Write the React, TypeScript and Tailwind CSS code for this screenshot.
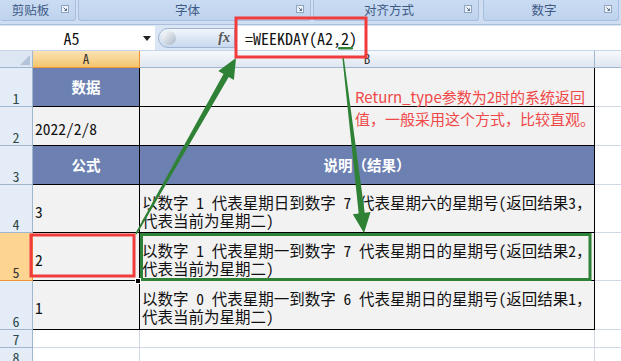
import type { ReactNode } from "react";

const cjk = "font-['Noto_Sans_CJK_SC','Noto_Sans_CJK_JP',sans-serif]";
const mono = "font-['Noto_Sans_Mono_CJK_SC','Noto_Sans_CJK_SC',monospace]";

const Launcher = () => (
	<svg width="8" height="8" viewBox="0 0 8 8" className="mr-[6px] mt-[5px] self-start">
		<rect x="0.5" y="0.5" width="7" height="7" fill="#eef3fa" stroke="#8ea3c0" />
		<path d="M2.5 2.5 L5.5 5.5 M3.5 5.5 H5.5 V3.5" stroke="#5b6f8f" strokeWidth="1" fill="none" />
	</svg>
);

const Group = ({ label, className }: { label: string; className: string }) => (
	<div
		className={`flex h-[21px] items-center rounded-b-[3px] border-x border-b border-[#a7bedc] bg-gradient-to-b from-[#cadcf2] to-[#bfd3ee] ${className}`}
	>
		<span className={`flex-1 text-center text-[12.5px] leading-none text-[#3e5a86] ${cjk}`}>{label}</span>
		<Launcher />
	</div>
);

const RowHead = ({ n, active }: { n: string; active?: boolean }) => (
	<div
		className={`flex w-[33px] shrink-0 items-end justify-center border-r border-b pb-[1px] text-[14px] leading-none ${mono} ${
			active
				? "border-[#f29436] bg-[#fdd591] text-[#333]"
				: "border-[#9eb6ce] bg-[#e4ecf7] text-[#2e4a4a]"
		}`}
	>
		{n}
	</div>
);

const HeadCell = ({ w, children }: { w: string; children?: ReactNode }) => (
	<div
		className={`flex ${w} shrink-0 items-center justify-center border-r border-b border-black bg-[#6c80b2] text-[14.5px] font-bold text-white ${cjk}`}
	>
		{children}
	</div>
);

const DataCell = ({ w, children }: { w: string; children?: ReactNode }) => (
	<div
		className={`flex ${w} shrink-0 items-center border-r border-b border-black bg-[#f2f2f2] pl-[2px] pt-[4px] text-[15.5px] leading-[18px] whitespace-nowrap text-[#111] ${mono}`}
	>
		<div>{children}</div>
	</div>
);

const Blank = () => <div className="flex-1 border-b border-[#d0d7e5] bg-white" />;

const lines: Record<string, [string, string]> = {
	"4": ["以数字 1 代表星期日到数字 7 代表星期六的星期号(返回结果3，", "代表当前为星期二)"],
	"5": ["以数字 1 代表星期一到数字 7 代表星期日的星期号(返回结果2，", "代表当前为星期二)"],
	"6": ["以数字 0 代表星期一到数字 6 代表星期日的星期号(返回结果1，", "代表当前为星期二)"],
};

export default function App() {
	return (
		<div className="relative h-[361px] w-[621px] overflow-hidden bg-white">
			{/* ribbon group labels */}
			<div className="flex h-[24px] gap-[2px] bg-[#cfdef2]">
				<Group label="剪贴板" className="w-[76px] border-l-0" />
				<Group label="字体" className="w-[233px]" />
				<Group label="对齐方式" className="w-[166px]" />
				<Group label="数字" className="ml-[2px] w-[136px]" />
			</div>

			{/* formula bar */}
			<div className="flex h-[26px] items-stretch border-t border-[#a9bfdc] bg-[#dbe6f4] pt-[1px]">
				<div className="flex w-[155px] items-center bg-white">
					<span className={`flex-1 text-center text-[16px] leading-none text-[#111] ${mono}`}>A5</span>
					<svg width="8" height="5" viewBox="0 0 8 5" className="mr-[4px]">
						<path d="M0 0 H8 L4 5 Z" fill="#222" />
					</svg>
				</div>
				<div className="my-[2px] ml-[3px] flex w-[77px] items-center rounded-l-full border border-[#9fb5d2] bg-gradient-to-b from-[#f1f6fc] to-[#c9d9ee]">
					<div className="ml-[3px] h-[14px] w-[14px] rounded-full bg-gradient-to-br from-[#ffffff] to-[#a9b6c6]" />
					<span className="ml-auto mr-[4px] font-['Liberation_Serif',serif] text-[14px] font-bold italic leading-none text-[#555]">
						fx
					</span>
				</div>
				<div className={`flex flex-1 items-center bg-white pl-[10px] text-[16px] text-[#111] ${mono}`}>
					=WEEKDAY(A2,2)
				</div>
			</div>

			{/* column headers */}
			<div className="flex h-[18px] border-t border-[#c5d5ea]">
				<div className="flex w-[33px] shrink-0 items-end justify-end border-r border-b border-[#9eb6ce] bg-[#dde7f4] p-[2px]">
					<svg width="10" height="10" viewBox="0 0 10 10">
						<path d="M10 0 V10 H0 Z" fill="#b4c4d8" />
					</svg>
				</div>
				<div
					className={`flex w-[107px] shrink-0 items-center justify-center border-r border-b border-[#f29436] bg-gradient-to-b from-[#fbe3b3] to-[#f3c56c] text-[13px] text-[#333] ${mono}`}
				>
					A
				</div>
				<div
					className={`flex w-[455px] shrink-0 items-center justify-center border-r border-b border-[#9eb6ce] bg-gradient-to-b from-[#f7f9fc] to-[#dfe6f0] text-[13px] text-[#333] ${mono}`}
				>
					B
				</div>
				<div className="flex-1 border-b border-[#9eb6ce] bg-gradient-to-b from-[#f7f9fc] to-[#dfe6f0]" />
			</div>

			{/* rows */}
			<div className="flex h-[39px]">
				<RowHead n="1" />
				<HeadCell w="w-[107px]">数据</HeadCell>
				<DataCell w="w-[455px]" />
				<Blank />
			</div>
			<div className="flex h-[39px]">
				<RowHead n="2" />
				<DataCell w="w-[107px]">2022/2/8</DataCell>
				<DataCell w="w-[455px]" />
				<Blank />
			</div>
			<div className="flex h-[39px]">
				<RowHead n="3" />
				<HeadCell w="w-[107px]">公式</HeadCell>
				<HeadCell w="w-[455px]">说明（结果）</HeadCell>
				<Blank />
			</div>
			{(["4", "5", "6"] as const).map((n, i) => (
				<div key={n} className={n === "6" ? "flex h-[49px]" : "flex h-[48px]"}>
					<RowHead n={n} active={n === "5"} />
					<DataCell w="w-[107px]">{3 - i}</DataCell>
					<DataCell w="w-[455px]">
						<div>{lines[n][0]}</div>
						<div>{lines[n][1]}</div>
					</DataCell>
					<Blank />
				</div>
			))}
			{["7", "8"].map((n) => (
				<div key={n} className="flex h-[18px]">
					<RowHead n={n} />
					<div className="w-[107px] shrink-0 border-r border-b border-[#d0d7e5]" />
					<div className="w-[455px] shrink-0 border-r border-b border-[#d0d7e5]" />
					<Blank />
				</div>
			))}

			{/* annotation text box */}
			<div className={`absolute left-[355px] top-[86px] text-[15px] leading-[22px] whitespace-nowrap text-[#f04848] ${cjk}`}>
				<div>Return_type参数为2时的系统返回</div>
				<div>值，一般采用这个方式，比较直观。</div>
			</div>

			{/* callout shapes */}
			<svg className="pointer-events-none absolute left-0 top-0" width="621" height="361" viewBox="0 0 621 361">
				<rect x="338" y="47" width="15" height="2.5" rx="1.2" fill="#2f8136" />
				<polygon
					points="136.7,234.4 228.7,76.9 233.9,79.9 236,58 218.3,70.9 223.5,73.9 135.3,233.6"
					fill="#2f8136"
				/>
				<polygon
					points="343.7,56.9 364.7,212.75 370.6,212 364,233 352.8,214.2 358.7,213.45 342.3,57.1"
					fill="#2f8136"
				/>
				<rect x="236" y="18" width="130" height="39" fill="none" stroke="#f03c3c" strokeWidth="3" />
				<rect x="31" y="235" width="103" height="41" fill="none" stroke="#f03c3c" strokeWidth="3" />
				<rect x="141.5" y="234.5" width="448.5" height="45" fill="none" stroke="#2f8136" strokeWidth="3" />
				<rect x="135.5" y="278.5" width="5" height="5" fill="#000" stroke="#fff" strokeWidth="1" />
			</svg>
		</div>
	);
}
